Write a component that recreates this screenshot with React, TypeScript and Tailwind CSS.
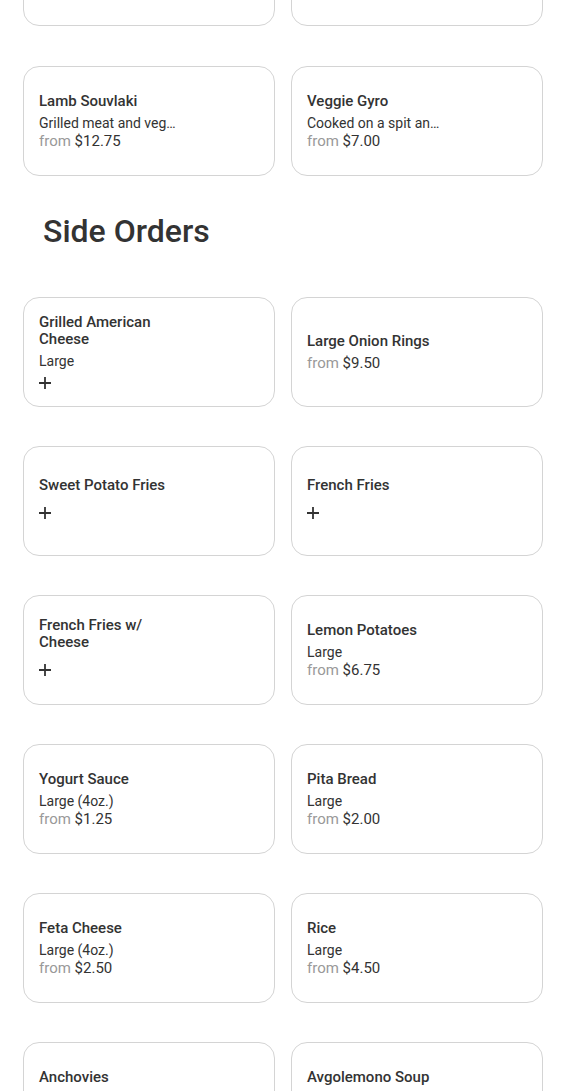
import React from 'react';

type Item = {
    name: string;
    desc?: string;
    price?: string;
    plus?: boolean;
};

const topRow: Item[] = [
    { name: 'Lamb Souvlaki', desc: 'Grilled meat and veg…', price: '$12.75' },
    { name: 'Veggie Gyro', desc: 'Cooked on a spit an…', price: '$7.00' },
];

const sides: Item[] = [
    { name: 'Grilled American Cheese', desc: 'Large', plus: true },
    { name: 'Large Onion Rings', price: '$9.50' },
    { name: 'Sweet Potato Fries', plus: true },
    { name: 'French Fries', plus: true },
    { name: 'French Fries w/ Cheese', plus: true },
    { name: 'Lemon Potatoes', desc: 'Large', price: '$6.75' },
    { name: 'Yogurt Sauce', desc: 'Large (4oz.)', price: '$1.25' },
    { name: 'Pita Bread', desc: 'Large', price: '$2.00' },
    { name: 'Feta Cheese', desc: 'Large (4oz.)', price: '$2.50' },
    { name: 'Rice', desc: 'Large', price: '$4.50' },
    { name: 'Anchovies', desc: 'Large', price: '$3.00' },
    { name: 'Avgolemono Soup', desc: 'Large', price: '$6.00' },
];

const PlusIcon = () => (
    <svg width="12" height="12" viewBox="0 0 12 12" fill="none" stroke="#333" strokeWidth="1.8">
        <path d="M6 0v12M0 6h12" />
    </svg>
);

const CardShell: React.FC<{ children?: React.ReactNode }> = ({ children }) => (
    <div className="h-[110px] rounded-2xl border border-[#d4d4d4] bg-white px-[15px] flex flex-col justify-center">
        {children}
    </div>
);

const MenuCard: React.FC<{ item: Item }> = ({ item }) => (
    <CardShell>
        <div className="w-[140px]">
            <p className="text-[15px] leading-[17px] font-medium text-[#333] mb-[4px]">{item.name}</p>
            {item.desc && (
                <p className="text-[14px] leading-[18px] text-[#333] truncate">{item.desc}</p>
            )}
            {item.price && (
                <p className="text-[15px] leading-[18px]">
                    <span className="text-[#999]">from </span>
                    <span className="text-[#333]">{item.price}</span>
                </p>
            )}
            {item.plus && (
                <div className={item.desc ? 'h-[21px] pt-[7px]' : 'h-[28px] pt-[9px]'}>
                    <PlusIcon />
                </div>
            )}
        </div>
    </CardShell>
);

const App: React.FC = () => {
    return (
        <div className="bg-white min-h-screen overflow-hidden" style={{ fontFamily: 'Roboto, "Liberation Sans", sans-serif' }}>
            <div className="pl-[23px] pr-[32px] -mt-[84px]">
                <div className="grid grid-cols-2 gap-x-4 gap-y-[40px]">
                    <CardShell />
                    <CardShell />
                    {topRow.map((item) => (
                        <MenuCard key={item.name} item={item} />
                    ))}
                </div>
                <h2 className="pl-[20px] mt-[35px] mb-[46px] text-[32px] leading-[40px] font-medium text-[#333]">Side Orders</h2>
                <div className="grid grid-cols-2 gap-x-4 gap-y-[39px] pb-10">
                    {sides.map((item) => (
                        <MenuCard key={item.name} item={item} />
                    ))}
                </div>
            </div>
        </div>
    );
};

export default App;
